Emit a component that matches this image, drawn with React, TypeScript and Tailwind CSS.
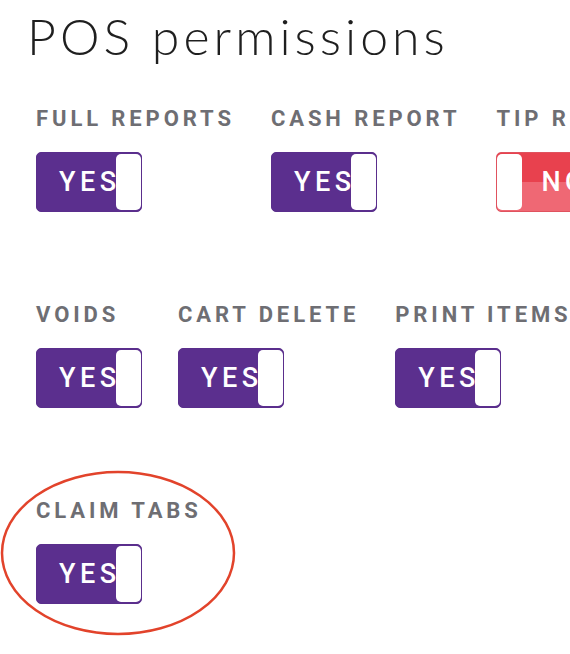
import React from "react";

type Perm = { label: string; on: boolean };

const rows: Perm[][] = [
  [
    { label: "Full Reports", on: true },
    { label: "Cash Report", on: true },
    { label: "Tip Report", on: false },
  ],
  [
    { label: "Voids", on: true },
    { label: "Cart Delete", on: true },
    { label: "Print Items", on: true },
  ],
  [{ label: "Claim Tabs", on: true }],
];

function Toggle({ on }: { on: boolean }) {
  if (on) {
    return (
      <div className="relative flex h-[60px] w-[106px] items-center rounded-[5px] border-[1.5px] border-[#5a2e8c] bg-[#5b2f8e] pl-[22px]">
        <span className="text-[27px] font-medium tracking-[4.5px] text-white">YES</span>
        {/* knob */}
        <div className="absolute bottom-[1px] right-0 top-[1px] w-[25px] rounded-[5px] bg-white" />
      </div>
    );
  }
  return (
    <div className="relative flex h-[60px] w-[106px] items-center rounded-[5px] border-[1.5px] border-[#e0525e] bg-[linear-gradient(to_bottom,#e8414e_50%,#ef6874_50%)] pl-[44px]">
      <span className="text-[27px] font-medium tracking-[4.5px] text-white">NO</span>
      <div className="absolute bottom-[1px] left-0 top-[1px] w-[25px] rounded-[5px] bg-white" />
    </div>
  );
}

export default function App() {
  return (
    <div className="relative h-[654px] w-[570px] overflow-hidden bg-white font-['Roboto',sans-serif]">
      <h1 className="pl-[27px] pt-[6px] font-['Lato',sans-serif] text-[50px] font-light leading-[60px] tracking-[4px] text-[#1f1f1f]">
        POS permissions
      </h1>

      <div className="mt-[42px] flex flex-col gap-[92px] pl-[36px]">
        {rows.map((row, i) => (
          <div key={i} className="flex gap-[36px] whitespace-nowrap">
            {row.map((p) => (
              <div key={p.label} className="flex flex-col gap-[22px]">
                <div className="text-[22px] font-bold uppercase leading-[22px] tracking-[3.9px] text-[#6e6e73]">
                  {p.label}
                </div>
                <Toggle on={p.on} />
              </div>
            ))}
          </div>
        ))}
      </div>

      {/* highlight ring */}
      <svg
        className="pointer-events-none absolute left-0 top-[470px]"
        width="240"
        height="168"
        viewBox="0 0 240 168"
      >
        <ellipse cx="118" cy="83" rx="116" ry="81" fill="none" stroke="#e2432b" strokeWidth="2.5" />
      </svg>
    </div>
  );
}
